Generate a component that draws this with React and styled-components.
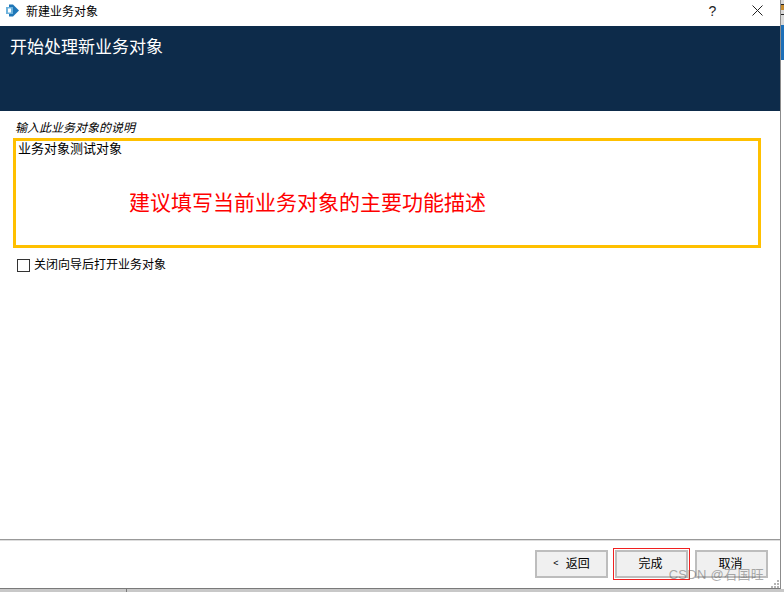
import React from 'react';
import styled, { createGlobalStyle } from 'styled-components';

const GlobalStyle = createGlobalStyle`
  html, body, #root {
    margin: 0;
    padding: 0;
    width: 100%;
    height: 100%;
    overflow: hidden;
    background: #fff;
    font-family: 'Liberation Sans', 'Noto Sans CJK SC', sans-serif;
  }
`;

const Desktop = styled.div`
  width: 784px;
  height: 592px;
  display: grid;
  grid-template-columns: 781px 3px;
  grid-template-rows: 589px 3px;
`;

const Dialog = styled.div`
  grid-column: 1;
  grid-row: 1;
  display: flex;
  flex-direction: column;
  background: #fff;
  border-right: 1px solid #8c8c8c;
  border-bottom: 1px solid #7a7a7a;
  box-sizing: border-box;
  min-height: 0;
  min-width: 0;
`;

const EdgeStrip = styled.div`
  grid-column: 2;
  grid-row: 1 / 3;
  background: linear-gradient(
    to bottom,
    #d8d8d8 0 4px,
    #222 4px 5px,
    #c58a2e 5px 10px,
    #d8d8d8 10px 14px,
    #222 14px 15px,
    #d8d8d8 15px 25px,
    #1d6fb8 25px 60px,
    #fff 60px 589px,
    #c8c8c8 589px
  );
`;

const BottomStrip = styled.div`
  grid-column: 1;
  grid-row: 2;
  background: #c8c8c8;
  display: flex;
  padding-left: 126px;
`;

const StripTick = styled.span`
  width: 1px;
  background: #7a7a7a;
`;

const TitleBar = styled.div`
  height: 26px;
  flex: none;
  display: flex;
  align-items: center;
  padding-left: 6px;
  font-size: 12px;
  color: #000;
`;

const AppIcon = styled.svg`
  width: 13px;
  height: 13px;
  margin-right: 7px;
  margin-top: -5px;
`;

const TitleText = styled.span`
  flex: 1;
  margin-top: -5px;
`;

const TitleButton = styled.span`
  width: 45px;
  display: flex;
  justify-content: center;
  margin-top: -5px;
  font-size: 14px;
  color: #222;
`;

const Banner = styled.div`
  height: 85px;
  flex: none;
  background: #0d2b4a;
  color: #fff;
  font-size: 17px;
  line-height: 22px;
  padding: 11px 0 0 10px;
  box-sizing: border-box;
`;

const Body = styled.div`
  flex: 1;
  display: flex;
  flex-direction: column;
  padding: 10px 19px 0 13px;
  min-height: 0;
`;

const Hint = styled.div`
  font-size: 12px;
  font-style: italic;
  line-height: 14px;
  color: #000;
  padding-left: 2px;
`;

const Highlight = styled.div`
  position: relative;
  height: 110px;
  margin-top: 3px;
  border: 3px solid #ffc000;
  box-sizing: border-box;
  font-size: 13px;
  line-height: 14px;
  color: #000;
  padding: 1px 0 0 2px;
`;

const Annotation = styled.span`
  position: absolute;
  left: 113px;
  top: 48px;
  font-size: 21px;
  line-height: 28px;
  color: #ff0000;
  white-space: nowrap;
`;

const CheckRow = styled.label`
  display: flex;
  align-items: center;
  gap: 4px;
  margin: 9px 0 0 4px;
  font-size: 12px;
  line-height: 16px;
  color: #000;
`;

const CheckBox = styled.span`
  width: 11px;
  height: 11px;
  border: 1px solid #333;
  background: #fff;
  flex: none;
`;

const Footer = styled.div`
  height: 49px;
  flex: none;
  display: flex;
  justify-content: flex-end;
  gap: 7px;
  padding: 10px 12px 0 0;
  box-sizing: border-box;
  border-top: 1px solid #999;
  box-shadow: inset 0 1px 0 #ddd;
`;

const Button = styled.div`
  width: 73px;
  height: 28px;
  flex: none;
  box-sizing: border-box;
  border: 2px solid #bdbdbd;
  background: #f0f0f0;
  outline: ${(p) => (p.$marked ? '1px solid #f02020' : 'none')};
  outline-offset: 1px;
  padding: 0 2px 3px 0;
  display: flex;
  align-items: center;
  justify-content: center;
  font-size: 12px;
  color: #000;
  white-space: nowrap;
`;

const Chevron = styled.span`
  font-size: 9px;
  margin: 0 7px 0 2px;
`;

const Watermark = styled.span`
  position: absolute;
  right: 20px;
  bottom: 9px;
  font-size: 13px;
  letter-spacing: 0.3px;
  line-height: 16px;
  color: rgba(90, 90, 90, 0.5);
  white-space: nowrap;
`;

const ResizeGrip = styled.svg`
  position: absolute;
  right: 4px;
  bottom: 3px;
  width: 9px;
  height: 9px;
`;

export default function App() {
  return (
    <>
      <GlobalStyle />
      <Desktop>
        <Dialog>
          <TitleBar>
            <AppIcon viewBox="0 0 13 13">
              <path d="M3 .5h4l6 6-6 6H3z" fill="#1f77b8" />
              <rect x="0" y="3" width="7" height="7" fill="#6fb3dc" />
              <rect x="2" y="4.5" width="3" height="4" fill="#fff" />
            </AppIcon>
            <TitleText>新建业务对象</TitleText>
            <TitleButton>?</TitleButton>
            <TitleButton>
              <svg width="11" height="11" viewBox="0 0 11 11">
                <path d="M.5.5l10 10M10.5.5l-10 10" stroke="#222" strokeWidth="1" fill="none" />
              </svg>
            </TitleButton>
          </TitleBar>
          <Banner>开始处理新业务对象</Banner>
          <Body>
            <Hint>输入此业务对象的说明</Hint>
            <Highlight>
              业务对象测试对象
              <Annotation>建议填写当前业务对象的主要功能描述</Annotation>
            </Highlight>
            <CheckRow>
              <CheckBox />
              关闭向导后打开业务对象
            </CheckRow>
          </Body>
          <Footer>
            <Button>
              <Chevron>&lt;</Chevron>返回
            </Button>
            <Button $marked>完成</Button>
            <Button>取消</Button>
          </Footer>
        </Dialog>
        <EdgeStrip />
        <BottomStrip>
          <StripTick />
        </BottomStrip>
      </Desktop>
      <Watermark>CSDN @石国旺</Watermark>
      <ResizeGrip viewBox="0 0 9 9">
        <g fill="#b4b4b4">
          <rect x="6" y="0" width="2" height="2" />
          <rect x="3" y="3" width="2" height="2" />
          <rect x="6" y="3" width="2" height="2" />
          <rect x="0" y="6" width="2" height="2" />
          <rect x="3" y="6" width="2" height="2" />
          <rect x="6" y="6" width="2" height="2" />
        </g>
      </ResizeGrip>
    </>
  );
}
